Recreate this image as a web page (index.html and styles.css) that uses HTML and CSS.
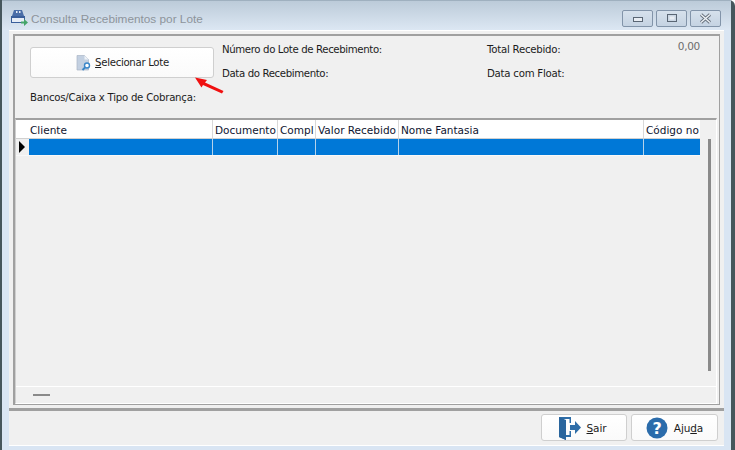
FILE: index.html
```html
<!DOCTYPE html>
<html lang="pt-BR">
<head>
<meta charset="utf-8">
<title>Consulta Recebimentos por Lote</title>
<link rel="stylesheet" href="styles.css">
</head>
<body>
<div class="window">
  <header class="titlebar">
    <svg class="app-icon" width="17" height="16" viewBox="0 0 17 16">
      <path d="M3 0h8l2 6H1z" fill="#4a6ea8"/>
      <path d="M5 1h1.500v2H5zM8 1h1.500v2H8z" fill="#e4ebf5"/>
      <path d="M0 6h14v7H0z" fill="#3a5f9b"/>
      <path d="M1 8h12v4H1z" fill="#e6edf6"/>
      <path d="M10 11.500h3V9l4 3.500-4 3.500v-2.500h-3z" fill="#45a56a"/>
    </svg>
    <span class="title">Consulta Recebimentos por Lote</span>
    <div class="controls">
      <span class="ctl"><i class="min"></i></span>
      <span class="ctl"><i class="max"></i></span>
      <span class="ctl">
        <svg width="13" height="11" viewBox="0 0 13 11">
          <path d="M2 1.500l9 8M11 1.500l-9 8" stroke="#66707c" stroke-width="3.200" fill="none"/>
          <path d="M2 1.500l9 8M11 1.500l-9 8" stroke="#eef2f6" stroke-width="1.400" fill="none"/>
        </svg>
      </span>
    </div>
  </header>

  <div class="client">
    <section class="panel">
      <div class="form">
        <div class="form-left">
          <button class="btn btn-lote" type="button">
            <svg width="15" height="16" viewBox="0 0 15 16">
              <path d="M1 .5h7.500l4 4V15H1z" fill="#c3d0e1" stroke="#aab6c6" stroke-width=".7"/>
              <path d="M8.500 .5v4h4z" fill="#eef2f7"/>
              <circle cx="11" cy="10.500" r="2.500" fill="#fff" stroke="#3a86c8" stroke-width="1.400"/>
              <path d="M9 12.500l-2.500 2.500" stroke="#3a86c8" stroke-width="1.800"/>
            </svg>
            <span class="btn-lote-text"><u>S</u>elecionar Lote</span>
          </button>
          <span class="label bancos">Bancos/Caixa x Tipo de Cobrança:</span>
        </div>
        <div class="form-mid">
          <span class="label">Número do Lote de Recebimento:</span>
          <span class="label">Data do Recebimento:</span>
        </div>
        <div class="form-right">
          <span class="label">Total Recebido:</span>
          <span class="label">Data com Float:</span>
        </div>
        <span class="total">0,00</span>
      </div>

      <div class="grid">
        <div class="grid-main">
          <div class="grid-table">
            <div class="row head">
              <span class="ind"></span>
              <span class="c1">Cliente</span>
              <span class="c2">Documento</span>
              <span class="c3">Compl</span>
              <span class="c4">Valor Recebido</span>
              <span class="c5">Nome Fantasia</span>
              <span class="c6">Código no</span>
            </div>
            <div class="row sel">
              <span class="ind"><i class="pointer"></i></span>
              <span class="c1"></span><span class="c2"></span><span class="c3"></span><span class="c4"></span><span class="c5"></span><span class="c6"></span>
            </div>
          </div>
          <div class="vscroll"><i></i></div>
        </div>
        <div class="hscroll"><i></i></div>
      </div>
    </section>

    <footer class="footer">
      <button class="btn btn-foot btn-sair" type="button">
        <svg width="22" height="24" viewBox="0 0 22 24">
          <path d="M0 1h12v6h-1.500V3H5v16h5.500v-4H12v6H7v3l-7-3z" fill="#2f6ea8"/>
          <path d="M0 1l7 3v20l-7-3z" fill="#2a659d"/>
          <path d="M11 9h5V5l6 6.500-6 6.500v-4h-5z" fill="#2f6ea8"/>
        </svg>
        <span><u>S</u>air</span>
      </button>
      <button class="btn btn-foot" type="button">
        <svg width="22" height="22" viewBox="0 0 22 22">
          <circle cx="11" cy="11" r="10.500" fill="#2b6cab"/>
          <text x="11" y="17" text-anchor="middle" class="qmark">?</text>
        </svg>
        <span>Aju<u>d</u>a</span>
      </button>
    </footer>
  </div>

  <svg class="arrow" width="32" height="17" viewBox="0 0 32 17">
    <path d="M1 .5l12 2.500-2 2.500 18.500 8.500-1.500 2.500L9 8 7.500 10.500z" fill="#f01010"/>
  </svg>
</div>
</body>
</html>
```

FILE: styles.css
```css
* { box-sizing: border-box; }
html, body { margin: 0; padding: 0; }
body {
  width: 735px;
  height: 450px;
  overflow: hidden;
  background: #fff;
  font-family: "DejaVu Sans", sans-serif;
  font-size: 10.5px;
  color: #1c1c1c;
}
.window {
  position: relative;
  width: 731px;
  height: 450px;
  display: flex;
  flex-direction: column;
  margin-right: 4px;
  border-left: 2px solid #46565c;
  box-shadow: 4px 0 0 #46565c;
  background: #d9e5f3;
  border-top-right-radius: 6px;
}
.titlebar {
  height: 30px;
  flex: none;
  display: flex;
  align-items: center;
  padding: 3px 10px 0 9px;
  border-top: 1px solid #9fb0bf;
  background: linear-gradient(#bccbd9, #dce7f3);
}
.app-icon { flex: none; margin-right: 3px; margin-top: 2px; }
.title {
  font-family: "Liberation Sans", sans-serif;
  font-size: 11.800px;
  color: #8d949b;
  margin-top: 3px;
}
.controls { margin-left: auto; display: flex; gap: 3px; margin-top: 2px; }
.ctl {
  width: 31px;
  height: 17px;
  border: 1px solid #8294a9;
  border-radius: 2px;
  background: linear-gradient(#d6e1ec, #c5d3e2);
  display: flex;
  align-items: center;
  justify-content: center;
}
.min { width: 10px; height: 5px; margin-top: 3px; background: #e8edf3; border: 1px solid #5a6674; }
.max { width: 10px; height: 8px; background: #e8edf3; border: 1px solid #5a6674; box-shadow: inset 0 0 0 1.500px #cbd7e4; }
.client {
  flex: 1;
  margin: 0 7px 5px 7px;
  background: #f0f0f0;
  border-top: 1px solid #fff;
  display: flex;
  flex-direction: column;
  box-shadow: 0 1px 0 #fff;
  min-height: 0;
}
.panel {
  flex: 1;
  margin: 3px 4px 0 4px;
  border-top: 2px solid #a0a0a0;
  border-left: 2px solid #a0a0a0;
  border-right: 1px solid #a0a0a0;
  border-bottom: 1px solid #a0a0a0;
  display: flex;
  flex-direction: column;
  min-height: 0;
}
.form {
  position: relative;
  height: 82px;
  flex: none;
  display: flex;
  padding: 11px 0 0 15px;
}
.form-left { width: 192px; display: flex; flex-direction: column; }
.btn {
  font: inherit;
  color: #1c1c1c;
  background: linear-gradient(#ffffff, #fafafa);
  border: 1px solid #cfcfcf;
  border-radius: 3px;
  display: flex;
  align-items: center;
  justify-content: center;
}
.btn-lote { width: 184px; height: 31px; gap: 4px; padding: 0 0 0 1px; }
.btn-lote-text { font-size: 10.200px; letter-spacing: -.32px; }
.bancos { margin-top: 14px; }
.form-mid { width: 265px; display: flex; flex-direction: column; gap: 12px; margin-top: -3px; }
.form-right { display: flex; flex-direction: column; gap: 12px; margin-top: -3px; }
.label {
  display: block;
  line-height: 12px;
  font-size: 10.200px;
  letter-spacing: -.25px;
  white-space: nowrap;
}
.form-mid .label { letter-spacing: -.38px; }
.total {
  position: absolute;
  top: 4px;
  right: 19px;
  color: #6c6c6c;
  font-size: 10.500px;
  letter-spacing: -.3px;
}
.grid {
  flex: 1;
  min-height: 0;
  display: flex;
  flex-direction: column;
  margin-right: 2px;
  border-top: 2px solid #a0a0a0;
  border-left: 1px solid #cfcfcf;
  border-right: 1px solid #fff;
  border-bottom: 1px solid #fff;
}
.grid-main { flex: 1; display: flex; min-height: 0; border-bottom: 1px solid #fff; }
.grid-table { flex: 1; min-width: 0; }
.row { display: flex; }
.row span { flex: none; border-right: 1px solid #d8d8d8; }
.head { height: 19px; background: #fff; border-bottom: 1px solid #d0d0d0; }
.head span {
  padding: 4px 0 0 2px;
  line-height: 13px;
  color: #0f1530;
  font-size: 10.500px;
  white-space: nowrap;
  overflow: hidden;
}
.head .c1 { padding-left: 1px; }
.sel { height: 17px; background: #0078d7; border-bottom: 1px solid #f8f8f8; }
.sel span { border-right-color: #b5d2ea; }
.row .ind { width: 13px; background: #f0f0f0; border-right: 0; }
.head .ind { background: #fff; padding: 0; }
.sel .ind { display: flex; align-items: center; padding-left: 3px; }
.pointer {
  width: 0;
  height: 0;
  border-left: 6px solid #000;
  border-top: 6px solid transparent;
  border-bottom: 6px solid transparent;
}
.c1 { width: 184px; }
.c2 { width: 65px; }
.c3 { width: 38px; }
.c4 { width: 83px; }
.c5 { width: 245px; }
.row .c6 { width: 57px; border-right: 0; }
.vscroll { width: 16px; flex: none; padding: 19px 0 15px 8px; background: #f0f0f0; }
.vscroll i { display: block; width: 3px; height: 100%; background: #8a8a8a; }
.hscroll { height: 16px; flex: none; padding: 7px 0 0 17px; }
.hscroll i { display: block; width: 17px; height: 2px; background: #8a8a8a; }
.footer {
  height: 37px;
  flex: none;
  margin-top: 3px;
  display: flex;
  justify-content: flex-end;
  gap: 4px;
  padding: 3px 6px 0 0;
  border-top: 3px solid #a0a0a0;
}
.btn-foot { width: 87px; height: 27px; gap: 6px; font-size: 10.500px; letter-spacing: -.1px; }
.btn-sair { width: 86px; padding-left: 3px; }
.qmark { font-family: "DejaVu Sans", sans-serif; font-weight: 700; font-size: 16px; fill: #fff; }
.arrow { position: absolute; left: 192px; top: 77px; }
```
